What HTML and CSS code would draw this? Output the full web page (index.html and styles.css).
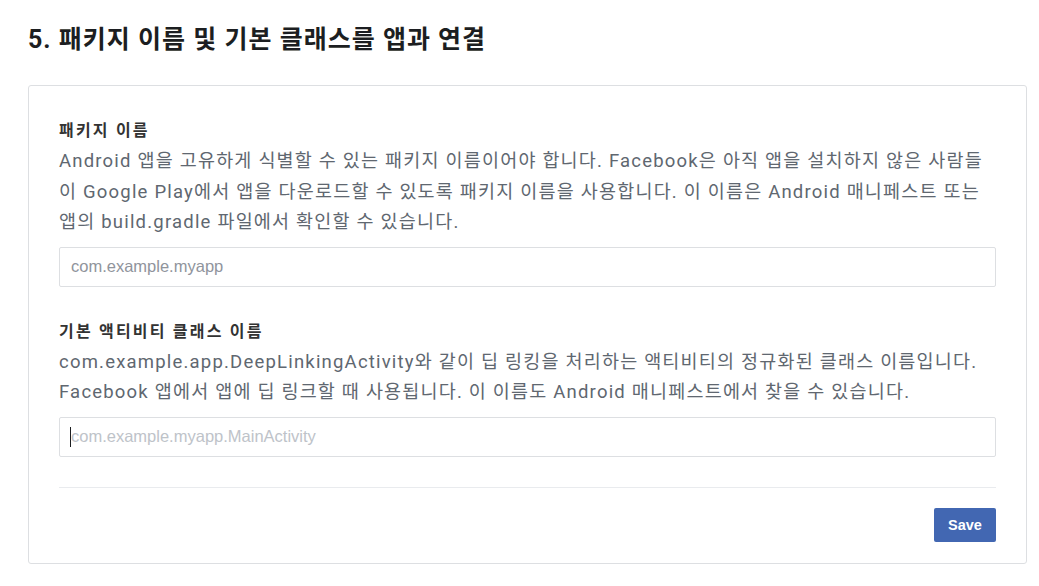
FILE: index.html
```html
<!DOCTYPE html>
<html lang="ko">

<head>
    <meta charset="UTF-8">
    <meta name="viewport" content="width=device-width, initial-scale=1.0">
    <title>패키지 이름 및 기본 클래스</title>
    <link rel="stylesheet" href="styles.css">
</head>

<body>
    <main class="page">
        <h2 class="step-title">5. 패키지 이름 및 기본 클래스를 앱과 연결</h2>
        <section class="card">
            <div class="field">
                <div class="field-label">패키지 이름</div>
                <p class="field-help">Android 앱을 고유하게 식별할 수 있는 패키지 이름이어야 합니다. Facebook은 아직 앱을 설치하지 않은 사람들<br>이 Google Play에서 앱을 다운로드할 수 있도록 패키지 이름을 사용합니다. 이 이름은 Android 매니페스트 또는<br>앱의 build.gradle 파일에서 확인할 수 있습니다.</p>
                <input type="text" class="text-input" placeholder="com.example.myapp">
            </div>
            <div class="field">
                <div class="field-label">기본 액티비티 클래스 이름</div>
                <p class="field-help">com.example.app.DeepLinkingActivity와 같이 딥 링킹을 처리하는 액티비티의 정규화된 클래스 이름입니다.<br>Facebook 앱에서 앱에 딥 링크할 때 사용됩니다. 이 이름도 Android 매니페스트에서 찾을 수 있습니다.</p>
                <div class="input-wrap focused">
                    <input type="text" class="text-input" placeholder="com.example.myapp.MainActivity">
                </div>
            </div>
            <div class="card-footer">
                <button class="save-button">Save</button>
            </div>
        </section>
    </main>
</body>

</html>
```

FILE: styles.css
```css
:root {
    --text-dark: #1c1e21;
    --text-gray: #606770;
    --border: #dddfe2;
    --fb-blue: #4267b2;
}

body {
    margin: 0;
    padding: 0;
    background: #fff;
    font-family: Roboto, "Noto Sans CJK KR", sans-serif;
}

.page {
    padding: 25px 12px 20px 28px;
}

.step-title {
    margin: 0 0 30px 0;
    font-size: 25px;
    line-height: 30px;
    letter-spacing: 1px;
    font-weight: bold;
    color: var(--text-dark);
}

.card {
    border: 1px solid var(--border);
    border-radius: 3px;
    padding: 35px 30px 21px 30px;
}

.field {
    display: flex;
    flex-direction: column;
}

.field + .field {
    margin-top: 35px;
}

.field-label {
    font-size: 16px;
    line-height: 20px;
    letter-spacing: 2.2px;
    font-weight: bold;
    color: #333;
}

.field-help {
    margin: 5px 0 9px 0;
    font-size: 18.5px;
    line-height: 30.5px;
    letter-spacing: 1.2px;
    color: var(--text-gray);
}

.input-wrap {
    display: flex;
    flex-direction: column;
    position: relative;
}

.text-input {
    height: 40px;
    box-sizing: border-box;
    border: 1px solid var(--border);
    border-radius: 2px;
    padding: 0 11px;
    font-family: "Liberation Sans", Arial, sans-serif;
    font-size: 16.5px;
    color: var(--text-dark);
    outline: none;
}

.text-input::placeholder {
    color: #90949c;
}

.focused .text-input::placeholder {
    color: #bec3c9;
}

/* text caret of the focused field */
.focused::before {
    content: "";
    position: absolute;
    left: 11px;
    top: 10px;
    width: 1px;
    height: 20px;
    background: #1c1e21;
}

.card-footer {
    margin-top: 30px;
    padding-top: 20px;
    border-top: 1px solid #e9ebee;
    display: flex;
    justify-content: flex-end;
}

.save-button {
    width: 62px;
    height: 34px;
    border: none;
    border-radius: 2px;
    background: var(--fb-blue);
    color: #fff;
    font-family: "Liberation Sans", Arial, sans-serif;
    font-size: 14.5px;
    font-weight: bold;
    cursor: pointer;
}
```
